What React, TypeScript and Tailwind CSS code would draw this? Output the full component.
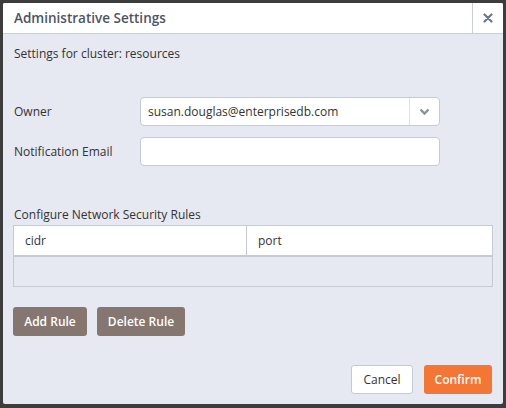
import React from "react";

export default function App() {
  return (
    <div
      className="w-[506px] h-[408px] bg-[#3d3d3d] pt-[3px] pl-[3px] pr-[3px] pb-[4px]"
      style={{ fontFamily: '"Open Sans", sans-serif' }}
    >
      <div className="w-[500px] h-[401px] bg-[#e6e9f1] flex flex-col rounded-[2px] overflow-hidden">
        {/* Header */}
        <div className="h-[31px] bg-white border-b border-[#c9ced8] flex items-stretch shrink-0">
          <div className="flex-1 flex items-center pl-[11px] text-[13.5px] font-semibold text-[#4d5461]">
            Administrative Settings
          </div>
          <div className="w-[31px] border-l border-[#c9ced8] flex items-center justify-center">
            <svg width="10" height="10" viewBox="0 0 10 10">
              <path d="M1.5 1.5 L8.5 8.5 M8.5 1.5 L1.5 8.5" stroke="#6e7786" strokeWidth="2.2" strokeLinecap="round" />
            </svg>
          </div>
        </div>
        {/* Body */}
        <div className="flex-1 flex flex-col px-[10px]">
          <div className="mt-[11px] pl-[1px] text-[12px] text-[#333] leading-[18px]">Settings for cluster: resources</div>

          <div className="mt-[34px] flex items-center h-[29px]">
            <div className="w-[127px] pl-[1px] text-[12px] text-[#333]">Owner</div>
            <div className="w-[300px] h-[29px] bg-white border border-[#c5cad3] rounded-[4px] flex items-stretch">
              <div className="flex-1 flex items-center pl-[7px] text-[12px] text-[#333]">susan.douglas@enterprisedb.com</div>
              <div className="w-[30px] border-l border-[#dcdfe5] flex items-center justify-center">
                <svg width="11" height="8" viewBox="0 0 11 8">
                  <path d="M1.5 1.5 L5.5 5.5 L9.5 1.5" fill="none" stroke="#8a929e" strokeWidth="2.4" />
                </svg>
              </div>
            </div>
          </div>

          <div className="mt-[11px] flex items-center h-[29px]">
            <div className="w-[127px] pl-[1px] text-[12px] text-[#333]">Notification Email</div>
            <div className="w-[300px] h-[29px] bg-white border border-[#c5cad3] rounded-[4px]" />
          </div>

          <div className="mt-[40px] text-[12px] text-[#333] leading-[18px] pl-[1px]">Configure Network Security Rules</div>
          <div className="mt-[1px] w-[480px] border border-[#c5cad3]">
            <div className="h-[31px] bg-white flex border-b-2 border-[#c5cad3]">
              <div className="w-[233px] border-r border-[#c5cad3] flex items-center pl-[11px] text-[12px] text-[#333]">cidr</div>
              <div className="flex-1 flex items-center pl-[11px] text-[12px] text-[#333]">port</div>
            </div>
            <div className="h-[29px] bg-[#e6e9f1]" />
          </div>

          <div className="mt-[20px] flex gap-[10px]">
            <button className="h-[29px] w-[74px] bg-[#857770] text-white text-[12px] font-semibold rounded-[3px]">Add Rule</button>
            <button className="h-[29px] w-[88px] bg-[#857770] text-white text-[12px] font-semibold rounded-[3px]">Delete Rule</button>
          </div>

          <div className="mt-[29px] flex justify-end gap-[11px] pr-[1px]">
            <button className="h-[29px] w-[62px] bg-white border border-[#c5cad3] text-[#333] text-[12px] rounded-[3px]">Cancel</button>
            <button className="h-[29px] w-[68px] bg-[#f47634] text-white text-[12px] font-semibold rounded-[3px]">Confirm</button>
          </div>
        </div>
      </div>
    </div>
  );
}
